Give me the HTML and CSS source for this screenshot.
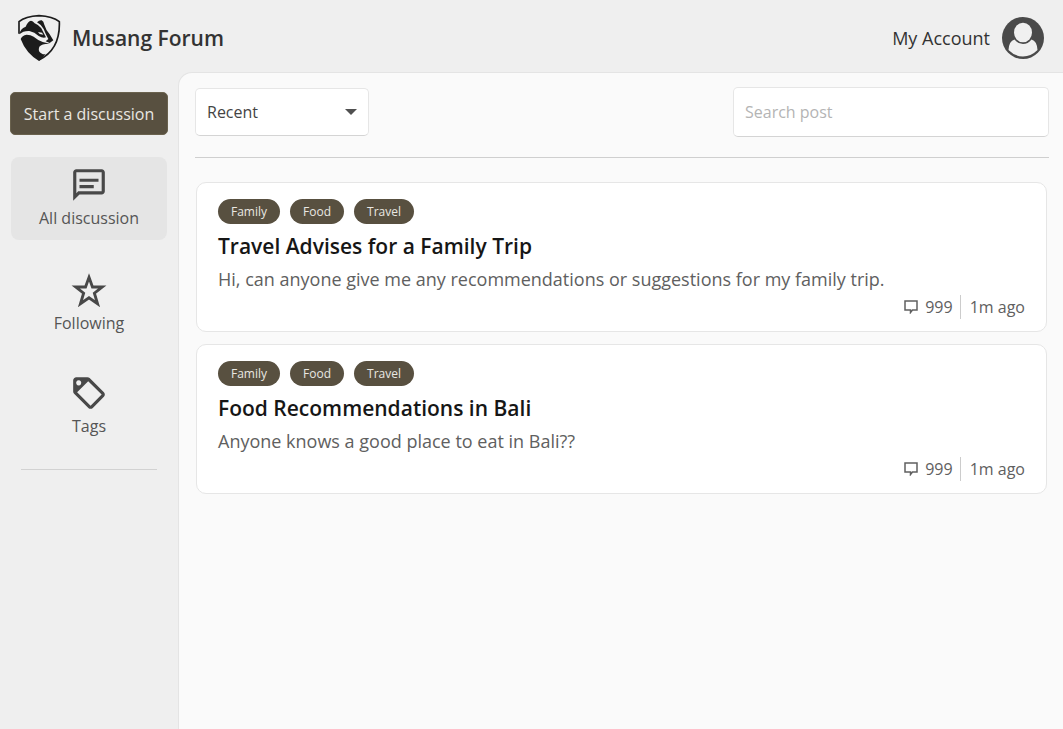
FILE: index.html
```html
<!DOCTYPE html>
<html lang="en">
<head>
<meta charset="utf-8">
<meta name="viewport" content="width=device-width, initial-scale=1">
<title>Musang Forum</title>
<link rel="stylesheet" href="styles.css">
</head>
<body>
<div class="app">
  <header class="topbar">
    <a class="brand" href="#">
      <svg class="brand-logo" viewBox="51 45 132 144" aria-hidden="true">
        <path class="logo-line" d="M57 104V68Q76 52 117 50Q158 52 178 68C180 120 160 162 117 183"/>
        <path class="logo-fill" d="M58 106Q60 90 77 83Q84 66 93 65Q99 66 104 73Q117 78 124 88Q130 100 138 115Q128 118 116 111Q104 99 88 96Q70 95 58 106Z"/>
        <path class="logo-fill" d="M111 70Q118 63 125 64Q131 67 133 77Q138 94 149 106L160 124L149 132L137 127L145 120Q137 106 131 90Q124 77 111 70Z"/>
        <path class="logo-gap" d="M114 99L126 101L130 107L119 105Z"/>
        <path class="logo-fill" d="M62 120Q66 109 80 107Q92 107 101 113Q113 123 128 129L150 134Q126 133 118 143Q112 158 126 164Q132 167 137 164Q129 177 117 186Q78 163 62 120Z"/>
      </svg>
      <span class="brand-name">Musang Forum</span>
    </a>
    <a class="account" href="#">
      <span>My Account</span>
      <svg class="avatar" viewBox="0 0 42 42" aria-hidden="true">
        <circle cx="21" cy="21" r="21" fill="#4a4a4a"/>
        <path d="M6.500 33Q7 24 12.500 22.500Q16 27 21 27T29.500 22.500Q35 24 35.500 33Q29 39.500 21 39.500T6.500 33Z" fill="#f0f0f0"/>
        <ellipse cx="21" cy="15.500" rx="9" ry="9.800" fill="#f0f0f0"/>
      </svg>
    </a>
  </header>

  <aside class="sidebar">
    <button class="start" type="button">Start a discussion</button>
    <nav class="nav">
      <a class="nav-item active" href="#" aria-current="page">
        <svg class="nav-icon" viewBox="0 0 24 24" aria-hidden="true"><path d="M4 4h16v12H5.170L4 17.170V4m0-2c-1.100 0-1.990.9-1.990 2L2 22l4-4h14c1.100 0 2-.9 2-2V4c0-1.100-.9-2-2-2H4zm2 10h9v2H6v-2zm0-4h12v2H6V8z"/></svg>
        <span>All discussion</span>
      </a>
      <a class="nav-item" href="#">
        <svg class="nav-icon" viewBox="0 0 24 24" aria-hidden="true"><path class="star" d="M12 4L14.200 10.100H20.400L15.400 14 17.400 20.700 12 16.900 6.600 20.700 8.600 14 3.600 10.100H9.800z"/></svg>
        <span>Following</span>
      </a>
      <a class="nav-item" href="#">
        <svg class="nav-icon" viewBox="0 0 24 24" aria-hidden="true"><path fill-rule="evenodd" d="M21.410 11.580l-9-9C12.050 2.220 11.550 2 11 2H4c-1.100 0-2 .9-2 2v7c0 .55.220 1.050.590 1.420l9 9c.36.360.860.580 1.410.580s1.050-.22 1.410-.59l7-7c.37-.36.590-.86.590-1.410s-.23-1.060-.59-1.420zM13 20.010L4.500 11.500 11.500 4.500 20 13zM5.500 4a1.600 1.600 0 1 0 .001 0z"/></svg>
        <span>Tags</span>
      </a>
    </nav>
    <hr class="side-rule">
  </aside>

  <main class="content">
    <div class="toolbar">
      <div class="sort">
        <select class="sort-select" aria-label="Sort posts">
          <option>Recent</option>
          <option>Popular</option>
        </select>
        <svg class="sort-arrow" viewBox="0 0 12 6" aria-hidden="true"><path d="M0 0h12L6 6z"/></svg>
      </div>
      <input class="search" type="search" placeholder="Search post" aria-label="Search post">
    </div>

    <div class="posts">
      <article class="post">
        <div class="chips"><a class="chip" href="#">Family</a><a class="chip" href="#">Food</a><a class="chip" href="#">Travel</a></div>
        <h2 class="post-title">Travel Advises for a Family Trip</h2>
        <p class="post-text">Hi, can anyone give me any recommendations or suggestions for my family trip.</p>
        <div class="meta">
          <span class="replies"><svg class="reply-icon" viewBox="0 0 14 14" aria-hidden="true"><path d="M1 1h12v9H8.500L6.500 12.500V10H1z"/></svg>999</span>
          <time class="age">1m ago</time>
        </div>
      </article>
      <article class="post">
        <div class="chips"><a class="chip" href="#">Family</a><a class="chip" href="#">Food</a><a class="chip" href="#">Travel</a></div>
        <h2 class="post-title">Food Recommendations in Bali</h2>
        <p class="post-text">Anyone knows a good place to eat in Bali??</p>
        <div class="meta">
          <span class="replies"><svg class="reply-icon" viewBox="0 0 14 14" aria-hidden="true"><path d="M1 1h12v9H8.500L6.500 12.500V10H1z"/></svg>999</span>
          <time class="age">1m ago</time>
        </div>
      </article>
    </div>
  </main>
</div>
</body>
</html>
```
FILE: styles.css
```css
* {
  box-sizing: border-box;
}

body {
  margin: 0;
  background: #efefef;
  color: #333;
  font-family: "Open Sans", "Noto Sans", sans-serif;
  font-size: 16px;
}

a {
  color: inherit;
  text-decoration: none;
}

.app {
  display: grid;
  grid-template-columns: 178px 1fr;
  grid-template-rows: auto 1fr;
  min-height: 100vh;
}

.topbar {
  grid-column: 1 / -1;
  display: flex;
  align-items: center;
  justify-content: space-between;
  padding: 14px 19px 10px 17px;
}

.brand,
.account {
  display: flex;
  align-items: center;
  gap: 12px;
}

.brand {
  gap: 11px;
}

.brand-logo {
  width: 44px;
  height: 48px;
}

.logo-line {
  fill: none;
  stroke: #1c1c1c;
  stroke-width: 5;
}

.logo-fill {
  fill: #1c1c1c;
}

.logo-gap {
  fill: #efefef;
}

.brand-name {
  font-size: 21px;
  font-weight: 600;
}

.account {
  font-size: 18px;
}

.avatar {
  width: 42px;
  height: 42px;
}

.sidebar {
  padding: 20px 10px;
}

.start {
  width: 100%;
  height: 43px;
  padding: 0;
  border: 1px solid #6a624e;
  border-radius: 5px;
  background: #585040;
  color: #e9e7e2;
  font: inherit;
}

.nav {
  display: flex;
  flex-direction: column;
  gap: 20px;
  margin: 22px 1px 0;
}

.nav-item {
  display: flex;
  flex-direction: column;
  align-items: center;
  gap: 2px;
  padding: 9px 0 10px;
  border-radius: 8px;
  color: #555;
  line-height: 24px;
}

.nav-item.active {
  margin-bottom: 2px;
  background: #e5e5e5;
}

.nav-icon {
  width: 38px;
  height: 38px;
  fill: #484848;
}

.star {
  fill: none;
  stroke: #484848;
  stroke-width: 1.800;
}

.side-rule {
  margin: 21px 11px 0;
  border: 0;
  border-top: 1px solid #d2d2d2;
}

.content {
  padding: 14px 14px 20px 16px;
  border: 1px solid #e4e4e4;
  border-width: 1px 0 0 1px;
  border-top-left-radius: 14px;
  background: #fafafa;
}

.toolbar {
  display: flex;
  align-items: center;
  justify-content: space-between;
  gap: 20px;
  padding-bottom: 20px;
  border-bottom: 1px solid #cfcfcf;
}

.sort {
  position: relative;
}

.sort-select,
.search {
  border: 1px solid #e6e6e6;
  border-bottom-color: #d4d4d4;
  border-radius: 5px;
  background: #fff;
  color: #444;
  font: inherit;
}

.sort-select {
  width: 174px;
  height: 48px;
  padding: 0 11px;
  appearance: none;
}

.sort-arrow {
  position: absolute;
  top: 21px;
  right: 12px;
  width: 12px;
  height: 6px;
  fill: #505050;
  pointer-events: none;
}

.search {
  flex: 0 1 316px;
  height: 50px;
  padding: 0 11px;
  appearance: none;
}

.search::placeholder {
  color: #b4b4b4;
}

.posts {
  display: flex;
  flex-direction: column;
  gap: 12px;
  padding: 24px 2px 0 1px;
}

.post {
  padding: 16px 21px 12px;
  border: 1px solid #e6e6e6;
  border-radius: 10px;
  background: #fff;
}

.chips {
  display: flex;
  gap: 10px;
}

.chip {
  padding: 0 13px;
  border-radius: 13px;
  background: #585040;
  color: #e9e7e2;
  font-size: 12px;
  line-height: 25px;
}

.post-title {
  margin: 5px 0 0;
  color: #161616;
  font-size: 21px;
  font-weight: 600;
  line-height: 34px;
}

.post-text {
  margin: 0;
  color: #606060;
  font-size: 18px;
  line-height: 32px;
}

.meta {
  display: flex;
  justify-content: flex-end;
  color: #606060;
  line-height: 24px;
}

.replies {
  display: flex;
  align-items: center;
  gap: 7px;
}

.reply-icon {
  width: 14px;
  height: 14px;
  fill: none;
  stroke: #606060;
  stroke-width: 1.500;
}

.age {
  margin-left: 7px;
  padding-left: 9px;
  border-left: 1px solid #ccc;
}
```
